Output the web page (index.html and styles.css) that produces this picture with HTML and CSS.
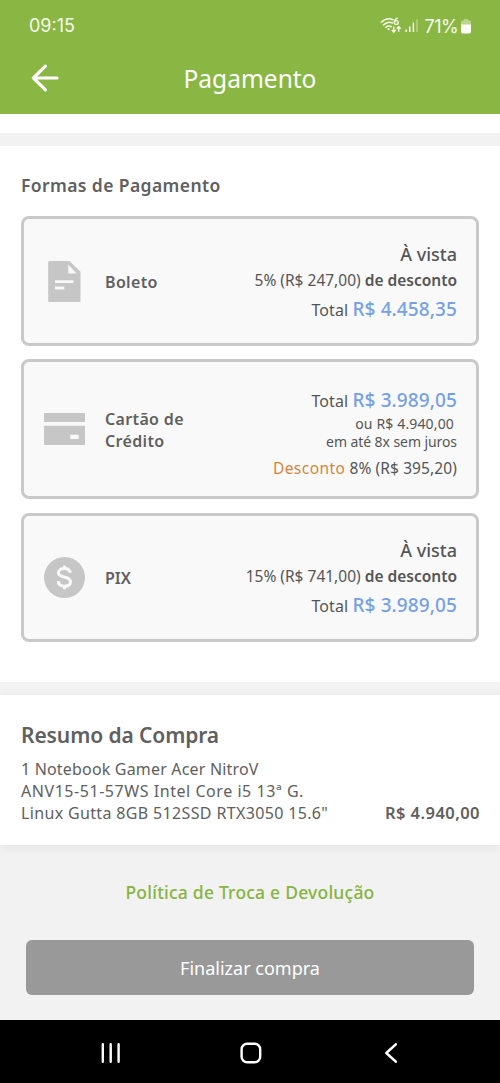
FILE: index.html
```html
<!DOCTYPE html>
<html lang="pt-BR">
<head>
<meta charset="utf-8">
<title>Pagamento</title>
<link rel="stylesheet" href="styles.css">
</head>
<body>
<header class="top">
  <div class="status">
    <span class="clock">09:15</span>
    <div class="status-right">
      <svg class="signals" width="40" height="18" viewBox="0 0 40 18" fill="none" stroke="#f4f9e8">
        <path d="M1.3 5.2Q6.8-.2 13 2.7M3.4 7.9Q8 3.6 12.6 6M5.8 10.3Q8.5 8.1 11.5 9.6" stroke-width="1.5" stroke-linecap="round"/>
        <circle cx="8.6" cy="12.2" r="1.1" fill="#f4f9e8" stroke="none"/>
        <path d="M17.2 1.2Q14.6 2.2 14.5 5.2" stroke-width="1.4" stroke-linecap="round"/>
        <circle cx="16.3" cy="5.5" r="1.9" stroke-width="1.4"/>
        <path d="M13.8 9.8V15M11.9 13l1.9 2.1 1.9-2.1M18.7 14.8V9.8M16.8 11.7l1.9-2.1 1.9 2.1" stroke-width="1.4"/>
        <path d="M26.2 12.5V15M29.8 9.5V15M33.4 5.5V15" stroke-width="1.5"/>
        <path d="M37 2.2V15" stroke-width="1.5" opacity=".4"/>
      </svg>
      <span class="percent">71%</span>
      <svg class="battery" width="10" height="15" viewBox="0 0 10 15">
        <path d="M3 0h4v1.3h1A2 2 0 0 1 10 3.3V6H0V3.3a2 2 0 0 1 2-2h1z" fill="#f4f9e8" opacity=".45"/>
        <path d="M0 5.5h10v7a2 2 0 0 1-2 2H2a2 2 0 0 1-2-2z" fill="#fbfdf5"/>
      </svg>
    </div>
  </div>
  <div class="appbar">
    <svg class="back" width="28" height="28" viewBox="0 0 28 28" fill="none" stroke="#fff" stroke-width="3.2" stroke-linecap="round" stroke-linejoin="round"><path d="M26 14H2.5M14.4 2.2L2.4 14l12 11.8"/></svg>
    <h1 class="title">Pagamento</h1>
  </div>
</header>
<div class="strip"></div>
<main>
  <section class="methods">
    <h2 class="methods-title">Formas de Pagamento</h2>
    <article class="card boleto">
      <div class="icon"><svg width="33" height="41" viewBox="0 0 33 41"><path fill-rule="evenodd" fill="#c6c6c6" d="M1.2 0H21.5L32.5 10.8V40A1 1 0 0 1 31.5 41H1.2A1 1 0 0 1 .2 40V1A1 1 0 0 1 1.2 0ZM20.3 3.8V12.4H28.6ZM7 19.3V22H25.5V19.3ZM7 25.6V28.4H16.3V25.6Z"/></svg></div>
      <h3 class="name">Boleto</h3>
      <div class="details">
        <p class="cash">À vista</p>
        <p class="discount">5% (R$ 247,00) <b>de desconto</b></p>
        <p class="total">Total <span class="price">R$ 4.458,35</span></p>
      </div>
    </article>
    <article class="card credit">
      <div class="icon"><svg width="41" height="32" viewBox="0 0 41 32"><path fill-rule="evenodd" fill="#c6c6c6" d="M1 0H40A1 1 0 0 1 41 1V9H0V1A1 1 0 0 1 1 0ZM0 12.8H41V31A1 1 0 0 1 40 32H1A1 1 0 0 1 0 31ZM26.3 21.7V26H34.7V21.7Z"/></svg></div>
      <h3 class="name">Cartão de Crédito</h3>
      <div class="details">
        <p class="total">Total <span class="price">R$ 3.989,05</span></p>
        <p class="parcels shifted">ou R$ 4.940,00</p>
        <p class="parcels">em até 8x sem juros</p>
        <p class="card-discount"><span class="orange">Desconto</span> 8% (R$ 395,20)</p>
      </div>
    </article>
    <article class="card pix">
      <div class="icon"><svg width="41" height="41" viewBox="0 0 41 41" fill="none"><circle cx="20.5" cy="20.5" r="20.5" fill="#c6c6c6"/><path d="M26.3 15.7C25.9 12.7 23.5 11.5 20.3 11.5C16.9 11.5 14.4 13.1 14.4 15.7C14.4 21.8 26.5 18.2 26.5 24.8C26.5 27.8 23.9 29.3 20.5 29.3C16.8 29.3 14.4 27.6 14.2 24.2M20.5 8.8V11.8M20.5 29.2V32.2" stroke="#f9f9f9" stroke-width="3"/></svg></div>
      <h3 class="name">PIX</h3>
      <div class="details">
        <p class="cash">À vista</p>
        <p class="discount">15% (R$ 741,00) <b>de desconto</b></p>
        <p class="total">Total <span class="price">R$ 3.989,05</span></p>
      </div>
    </article>
  </section>
  <section class="summary">
    <h2 class="summary-title">Resumo da Compra</h2>
    <div class="item">
      <p class="product"><span class="model">1 Notebook Gamer Acer NitroV</span><br><span class="code">ANV15-51-57WS Intel Core i5 13ª G.</span><br><span class="specs">Linux Gutta 8GB 512SSD RTX3050 15.6"</span></p>
      <strong class="amount">R$ 4.940,00</strong>
    </div>
  </section>
</main>
<footer class="footer">
  <a class="policy">Política de Troca e Devolução</a>
  <button class="finish">Finalizar compra</button>
</footer>
<nav class="nav">
  <svg width="20" height="20" viewBox="0 0 20 20" stroke="#fff" stroke-width="2.4" stroke-linecap="round"><path d="M1.8 1.3V18.7M9.7 1.3V18.7M17.6 1.3V18.7"/></svg>
  <svg width="22" height="22" viewBox="0 0 22 22" fill="none" stroke="#fff" stroke-width="2.4"><rect x="1.6" y="1.7" width="18.6" height="18.6" rx="5.5"/></svg>
  <svg width="14" height="20" viewBox="0 0 14 20" fill="none" stroke="#fff" stroke-width="2.5" stroke-linecap="round" stroke-linejoin="round"><path d="M11.8 1.3L2.3 10l9.5 8.7"/></svg>
</nav>
</body>
</html>
```
FILE: styles.css
```css
* { box-sizing: border-box; margin: 0; padding: 0; }
body { width: 500px; height: 1083px; overflow: hidden; background: #f2f2f2; color: #606060; font-family: "Noto Sans", "Open Sans", sans-serif; }
svg { display: block; }
.top { height: 114px; background: #8ab743; color: #fff; }
.status { height: 51px; display: flex; justify-content: space-between; align-items: center; padding: 0 29px; color: #f6faed; font-family: Inter, sans-serif; font-size: 18px; }
.status-right { display: flex; align-items: center; margin-top: 1px; }
.percent { letter-spacing: -.6px; margin: 0 3px 0 5px; }
.appbar { height: 54px; display: grid; grid-template-columns: 60px 1fr 60px; align-items: center; }
.back { margin-left: 31px; }
.title { font-size: 24.5px; font-weight: 400; text-align: center; }
.strip { height: 19px; background: #fff; }
.methods { height: 536px; margin-top: 13px; padding: 0 21px; background: #fff; }
.methods-title { height: 70px; padding-top: 27px; font-size: 17.5px; line-height: 25px; font-weight: 600; letter-spacing: .4px; }
.card { display: grid; grid-template-columns: 80px 111px 1fr; align-items: center; padding-right: 19px; border: 3px solid #c9c9c9; border-radius: 8px; background: #f9f9f9; margin-bottom: 13px; }
.boleto { height: 130px; }
.credit { height: 140px; margin-bottom: 14px; }
.pix { height: 129px; }
.icon { display: flex; justify-content: center; }
.name { padding: 3px 0 0 1px; font-size: 16px; line-height: 21.5px; font-weight: 600; letter-spacing: .35px; }
.pix .name { padding-top: 2px; letter-spacing: 0; }
.details { text-align: right; white-space: nowrap; color: #555; padding-top: 5px; }
.cash { font-size: 18px; line-height: 26px; font-weight: 500; }
.discount { font-size: 15.5px; line-height: 26px; }
.discount b { font-weight: 600; }
.total { font-size: 16px; line-height: 34px; letter-spacing: .1px; }
.price { font-size: 19px; line-height: 25px; font-weight: 500; letter-spacing: .1px; color: #76a0e6; }
.credit .details { padding-top: 14px; }
.credit .total { line-height: 28px; }
.parcels { font-size: 14px; line-height: 18px; letter-spacing: -.08px; }
.shifted { padding-right: 3px; letter-spacing: .15px; }
.card-discount { font-size: 15.5px; line-height: 34px; letter-spacing: .1px; }
.orange { color: #d6853e; letter-spacing: .45px; }
.summary { height: 150px; margin-top: 13px; padding: 23px 20px 0 21px; background: #fff; box-shadow: 0 2px 10px #0001; }
.summary-title { font-size: 21px; line-height: 34px; font-weight: 600; letter-spacing: -.1px; }
.item { display: flex; justify-content: space-between; align-items: flex-end; margin-top: 6px; font-size: 16px; line-height: 22px; }
.product { white-space: nowrap; }
.model { letter-spacing: .18px; }
.code { letter-spacing: .55px; }
.specs { letter-spacing: .35px; }
.amount { font-size: 16.5px; font-weight: 600; letter-spacing: .45px; }
.footer { height: 175px; padding: 35px 26px 0; text-align: center; }
.policy { display: block; font-size: 17.5px; line-height: 25px; font-weight: 500; letter-spacing: .22px; color: #87b440; }
.finish { display: block; width: 448px; height: 55px; margin-top: 35px; border: 0; border-radius: 6px; background: #999; color: #fff; font: 400 18px "Noto Sans", sans-serif; }
.nav { height: 63px; background: #000; display: grid; grid-template-columns: 140px 140px 140px; justify-items: center; align-items: center; padding: 3px 0 0 41px; }
```
